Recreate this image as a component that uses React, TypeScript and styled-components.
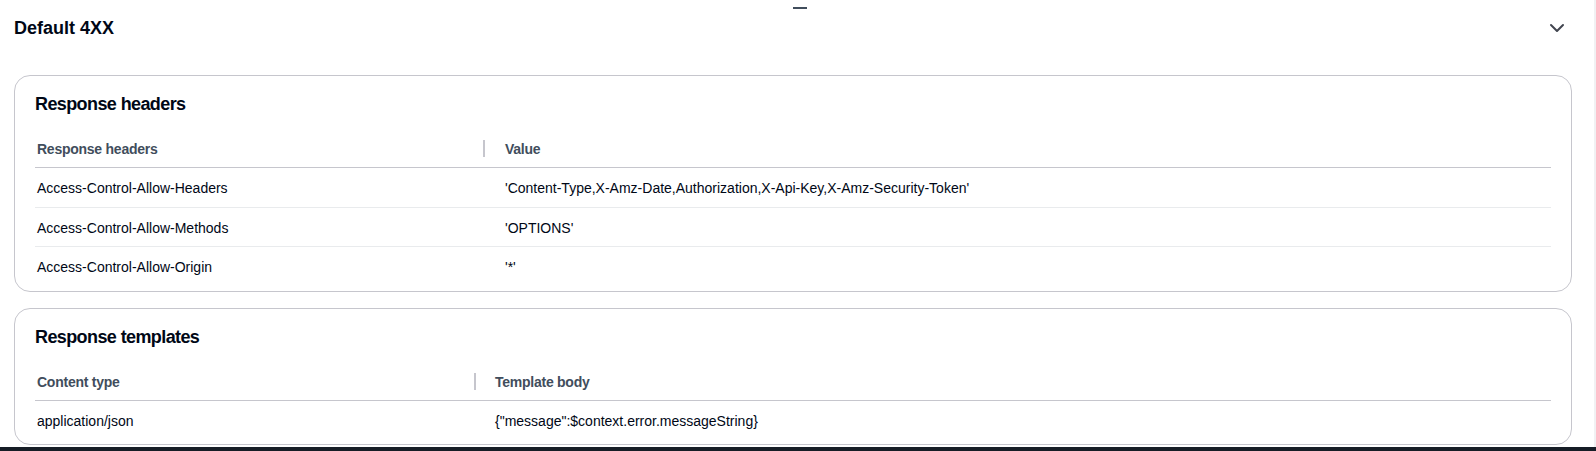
import { memo } from 'react';
import styled, { createGlobalStyle } from 'styled-components';

// SECTION: Styles

const GlobalStyle = createGlobalStyle`
  html, body {
    margin: 0;
    padding: 0;
    background: #ffffff;
    font-family: "Liberation Sans", Arial, sans-serif;
    color: #000716;
  }
  * {
    box-sizing: border-box;
  }
`;

const Page = styled.div`
  display: flex;
  flex-direction: column;
  width: 100%;
  height: 451px;
  overflow: hidden;
`;

const Main = styled.div`
  position: relative;
  flex: 1;
  display: flex;
  flex-direction: column;
  padding: 0 22px 0 14px;
  border-right: 2px solid #f1f1f3;
  overflow: hidden;
`;

const Handle = styled.div`
  position: absolute;
  top: 7px;
  left: 50%;
  margin-left: -4px;
  width: 14px;
  height: 2px;
  background: #414d5c;
`;

const BottomBar = styled.div`
  height: 4px;
  background: #161d26;
`;

const TopRow = styled.div`
  display: flex;
  align-items: center;
  justify-content: space-between;
  height: 56px;
  margin-bottom: 19px;
  padding-right: 5px;
`;

const Title = styled.h2`
  margin: 0;
  font-size: 18px;
  line-height: 22px;
  font-weight: 700;
  color: #000716;
`;

const Toggle = styled.button`
  display: flex;
  align-items: center;
  justify-content: center;
  width: 20px;
  height: 20px;
  padding: 0;
  border: none;
  background: none;
  color: #424650;
`;

const Cards = styled.div`
  display: flex;
  flex-direction: column;
  gap: 16px;
`;

const Card = styled.section`
  border: 1px solid #c6c6cd;
  border-radius: 16px;
  padding: 0 20px 5px;
`;

const CardTitle = styled.h3`
  margin: 0;
  padding-top: 17px;
  margin-bottom: 16px;
  font-size: 18px;
  line-height: 22px;
  font-weight: 700;
  letter-spacing: -0.6px;
  color: #000716;
`;

const Row = styled.div<{ $first: number; $head?: boolean; $last?: boolean }>`
  display: grid;
  grid-template-columns: ${(p) => p.$first}px 1fr;
  border-bottom: ${(p) =>
    p.$last ? 'none' : p.$head ? '1px solid #c6c6cd' : '1px solid #e9ebed'};
`;

const Cell = styled.div<{ $pad: number; $head?: boolean; $split?: boolean }>`
  position: relative;
  padding: ${(p) => (p.$head ? '8px' : '10px')} 0 ${(p) => (p.$head ? '8px' : '8.5px')};
  padding-left: ${(p) => p.$pad}px;
  font-size: 14px;
  line-height: 20px;
  font-weight: ${(p) => (p.$head ? 700 : 400)};
  letter-spacing: ${(p) => (p.$head ? '-0.25px' : 'normal')};
  color: ${(p) => (p.$head ? '#414d5c' : '#000716')};
  white-space: nowrap;

  &::before {
    content: '';
    display: ${(p) => (p.$split ? 'block' : 'none')};
    position: absolute;
    left: 0;
    top: 50%;
    width: 2px;
    height: 17px;
    margin-top: -9px;
    background: #c6c6cd;
  }
`;

// !SECTION

// SECTION: Main

interface TableProps {
  first: number;
  pad: number;
  columns: [string, string];
  rows: [string, string][];
}

const Table = ({ first, pad, columns, rows }: TableProps) => (
  <div>
    <Row $first={first} $head>
      <Cell $pad={2} $head>
        {columns[0]}
      </Cell>
      <Cell $pad={pad} $head $split>
        {columns[1]}
      </Cell>
    </Row>
    {rows.map(([a, b], i) => (
      <Row key={a} $first={first} $last={i === rows.length - 1}>
        <Cell $pad={2}>{a}</Cell>
        <Cell $pad={pad}>{b}</Cell>
      </Row>
    ))}
  </div>
);

const Chevron = () => (
  <svg width="16" height="16" viewBox="0 0 16 16" fill="none">
    <polyline
      points="2,5 8,11 14,5"
      stroke="currentColor"
      strokeWidth="2"
      strokeLinecap="round"
      strokeLinejoin="round"
    />
  </svg>
);

const headers: [string, string][] = [
  [
    'Access-Control-Allow-Headers',
    "'Content-Type,X-Amz-Date,Authorization,X-Api-Key,X-Amz-Security-Token'",
  ],
  ['Access-Control-Allow-Methods', "'OPTIONS'"],
  ['Access-Control-Allow-Origin', "'*'"],
];

const templates: [string, string][] = [
  ['application/json', '{"message":$context.error.messageString}'],
];

const App = () => (
  <Page>
    <GlobalStyle />
    <Main>
      <Handle />
      <TopRow>
        <Title>Default 4XX</Title>
        <Toggle aria-label="Collapse">
          <Chevron />
        </Toggle>
      </TopRow>
      <Cards>
        <Card>
          <CardTitle>Response headers</CardTitle>
          <Table
            first={448}
            pad={22}
            columns={['Response headers', 'Value']}
            rows={headers}
          />
        </Card>
        <Card>
          <CardTitle>Response templates</CardTitle>
          <Table
            first={439}
            pad={21}
            columns={['Content type', 'Template body']}
            rows={templates}
          />
        </Card>
      </Cards>
    </Main>
    <BottomBar />
  </Page>
);

// !SECTION

export default memo(App);
